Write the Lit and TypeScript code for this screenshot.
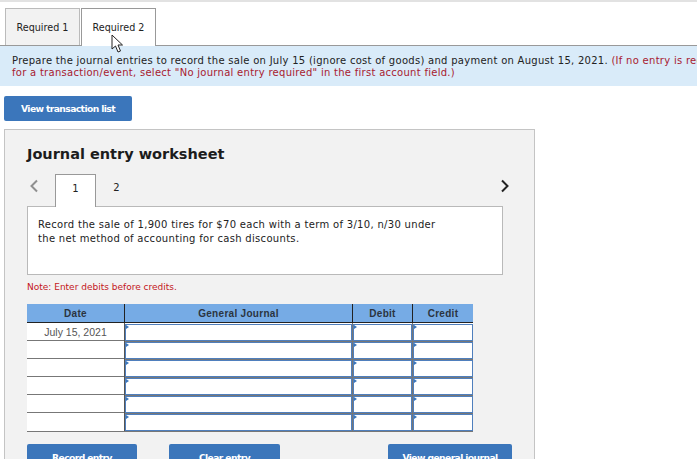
import { LitElement, html, css } from "lit";
import { customElement } from "lit/decorators.js";

@customElement("app-root")
export class AppRoot extends LitElement {
  static styles = css`
    :host { display: block; width: 699px; height: 459px; overflow: hidden; position: relative; background: #fff; font-family: "DejaVu Sans", Verdana, sans-serif; color: #222; font-size: 10px; }
    .topbar { height: 2px; background: #e2e2e2; margin-right: 2px; }
    .tabs { display: flex; gap: 1px; padding: 6px 2px 0 5px; height: 37px; box-sizing: content-box; border-bottom: 1px solid #999; margin-right: 2px; }
    .tab { width: 75px; height: 37px; box-sizing: border-box; display: flex; align-items: center; justify-content: center; border: 1px solid #bbb; border-bottom: none; background: #f2f2f2; font-size: 9.6px; }
    .tab.on { background: #fff; border-color: #999; height: 38px; padding-bottom: 1px; position: relative; z-index: 1; }
    .band { background: #d9ebf9; height: 40px; margin-right: 2px; box-sizing: border-box; padding: 9px 0 0 12px; line-height: 12px; font-size: 10px; white-space: nowrap; overflow: hidden; letter-spacing: 0.28px; }
    .red { color: #a8202f; }
    .btn { background: #3b76bb; color: #fff; border-radius: 2px; font-weight: 700; font-size: 9.2px; display: flex; align-items: center; justify-content: center; height: 25px; letter-spacing: -0.6px; flex: none; }
    .vt { width: 128px; margin: 10px 0 8px 4px; }
    .panel { margin-left: 4px; width: 531px; box-sizing: border-box; border: 1px solid #c4c4c4; background: #f2f2f2; padding: 15px 22px 20px; height: 340px; }
    h2 { margin: 0; font-size: 14.5px; font-weight: 700; line-height: 18px; color: #1c1c1c; }
    .steps { display: flex; align-items: stretch; height: 33px; margin-top: 11px; position: relative; z-index: 1; }
    .arrow { width: 28px; display: flex; align-items: flex-start; padding: 5px 0 0 0; }
    .arrow svg { display: block; margin-left: 2px; }
    .step { width: 41px; box-sizing: border-box; display: flex; align-items: center; justify-content: center; font-size: 10px; padding-bottom: 6px; }
    .step.on { background: #fff; border: 1px solid #999; border-bottom: none; height: 33px; }
    .spacer { flex: 1; }
    .next { width: auto; padding-right: 2px; }
    .box { width: 476px; height: 69px; box-sizing: border-box; margin-top: -1px; background: #fff; border: 1px solid #b9b9b9; padding: 11px 10px 0; line-height: 14px; font-size: 10px; letter-spacing: 0.31px; }
    .note { color: #c4161c; font-size: 9px; line-height: 12px; margin-top: 6px; }
    .grid { margin-top: 11px; width: 446px; display: grid; grid-template-columns: 97px 1px 227px 1px 59px 1px 60px; font-family: "Liberation Sans", Arial, sans-serif; }
    .h { background: #76abe5; height: 18px; display: flex; align-items: center; justify-content: center; font-weight: 700; font-size: 10px; color: #2b3440; letter-spacing: 0.3px; border-bottom: 1px solid #222; }
    .s { background: #222; height: 19px; }
    .rows { grid-column: 1 / -1; display: grid; grid-template-columns: 97px 1px 227px 1px 59px 1px 60px; background: #fff; border-bottom: 1px solid #777; }
    .d { height: 18px; box-sizing: border-box; border-bottom: 1px solid #777; display: flex; align-items: center; justify-content: center; font-size: 10.5px; color: #555; background: #fff; }
    .d.end { border-bottom: none; }
    .v { background: #777; height: 18px; }
    .dv { background: #555; }
    .c { height: 18px; box-sizing: border-box; background: #fff; border-top: 1px solid #777; }
    .c.first { border-top-color: #fff; }
    .i { height: 17px; box-sizing: border-box; border: 1px solid #4f7fbd; position: relative; }
    .i::before { content: ""; position: absolute; left: 0; top: 0; width: 0; height: 0; border-left: 3.5px solid #3b76bb; border-top: 2.5px solid transparent; border-bottom: 2.5px solid transparent; }
    .actions { display: flex; margin-top: 12px; width: 485px; }
    .actions .btn { height: 25px; border-radius: 2px 2px 0 0; padding-top: 2px; box-sizing: border-box; }
    .a1 { width: 110px; margin-right: 32px; }
    .a2 { width: 111px; margin-right: 108px; }
    .a3 { width: 124px; }
    .cursor { position: absolute; left: 111px; top: 34px; z-index: 5; }
  `;

  render() {
    const rows = ["July 15, 2021", "", "", "", "", ""];
    return html`
      <div class="topbar"></div>
      <div class="tabs">
        <div class="tab">Required 1</div>
        <div class="tab on">Required 2</div>
      </div>
      <div class="band">Prepare the journal entries to record the sale on July 15 (ignore cost of goods) and payment on August 15, 2021. <span class="red">(If no entry is required<br />for a transaction/event, select "No journal entry required" in the first account field.)</span></div>
      <div class="btn vt">View transaction list</div>
      <div class="panel">
        <h2>Journal entry worksheet</h2>
        <div class="steps">
          <div class="arrow"><svg width="10" height="14" viewBox="0 0 10 14"><path d="M8 1.500 2.500 7 8 12.500" fill="none" stroke="#8f8f8f" stroke-width="2"/></svg></div>
          <div class="step on">1</div>
          <div class="step">2</div>
          <div class="spacer"></div>
          <div class="arrow next"><svg width="10" height="14" viewBox="0 0 10 14"><path d="M2 1.500 7.500 7 2 12.500" fill="none" stroke="#222" stroke-width="2"/></svg></div>
        </div>
        <div class="box">Record the sale of 1,900 tires for $70 each with a term of 3/10, n/30 under<br />the net method of accounting for cash discounts.</div>
        <div class="note">Note: Enter debits before credits.</div>
        <div class="grid">
          <div class="h">Date</div><div class="s"></div>
          <div class="h">General Journal</div><div class="s"></div>
          <div class="h">Debit</div><div class="s"></div>
          <div class="h">Credit</div>
          <div class="rows">
            ${rows.map((r, n) => {
              const cell = html`<div class="c ${n === 0 ? "first" : ""}"><div class="i"></div></div>`;
              return html`
                <div class="d ${n === 5 ? "end" : ""}">${r}</div><div class="v dv"></div>
                ${cell}<div class="v"></div>
                ${cell}<div class="v"></div>
                ${cell}
              `;
            })}
          </div>
        </div>
        <div class="actions">
          <div class="btn a1">Record entry</div>
          <div class="btn a2">Clear entry</div>
          <div class="btn a3">View general journal</div>
        </div>
      </div>
      <svg class="cursor" width="13" height="19" viewBox="0 0 13 19"><path d="M1 1v14l3.500-3 2.500 6 2.500-1-2.500-6h4.500z" fill="#fff" stroke="#222" stroke-width="1"/></svg>
    `;
  }
}
